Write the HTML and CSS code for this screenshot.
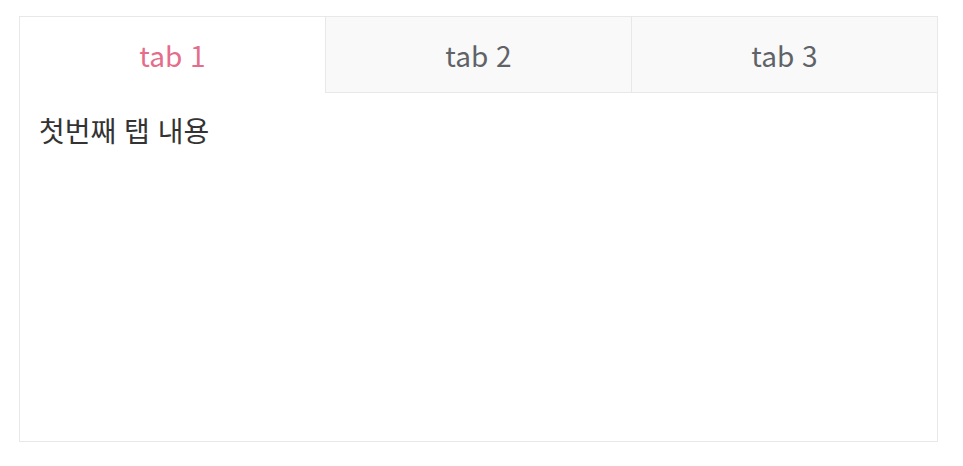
FILE: index.html
```html
<!DOCTYPE html>
<html lang="ko">
<head>
<meta charset="utf-8">
<link rel="stylesheet" href="styles.css">
</head>
<body>
<div class="tabs">
  <div class="tab-list">
    <div class="tab active">tab 1</div>
    <div class="tab">tab 2</div>
    <div class="tab">tab 3</div>
  </div>
  <div class="tab-panel">첫번째 탭 내용</div>
</div>
</body>
</html>
```
FILE: styles.css
```css
html, body {
  margin: 0;
  padding: 0;
  background: #fff;
}
body {
  padding: 16px 25px 0 19px;
  font-family: "Noto Sans CJK KR", "Noto Sans", sans-serif;
}
.tabs {
  border: 1px solid #e8e8e8;
  height: 424px;
  display: flex;
  flex-direction: column;
}
.tab-list {
  display: flex;
}
.tab {
  flex: 1;
  height: 75px;
  display: flex;
  align-items: center;
  justify-content: center;
  font-size: 28px;
  color: #5f6368;
  background: #f9f9f9;
  border-bottom: 1px solid #e8e8e8;
  border-left: 1px solid #e8e8e8;
}
.tab:first-child {
  border-left: none;
}
.tab.active {
  background: #fff;
  color: #e36d8b;
  border-bottom-color: transparent;
}
.tab-panel {
  padding: 17px 19px;
  font-size: 28px;
  color: #333;
}
```
